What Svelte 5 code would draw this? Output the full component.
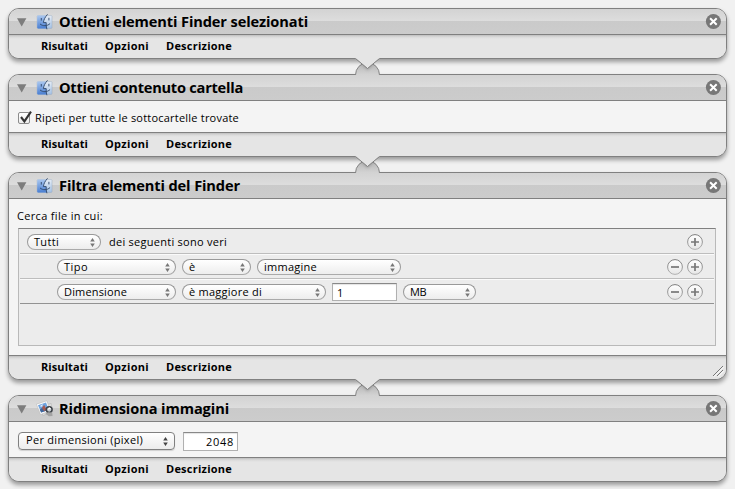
<script>
  const cards = [
    { title: 'Ottieni elementi Finder selezionati', width: 249, icon: 'finder', kind: 'none' },
    { title: 'Ottieni contenuto cartella', width: 184, icon: 'finder', kind: 'folder' },
    { title: 'Filtra elementi del Finder', width: 181, icon: 'finder', kind: 'filter' },
    { title: 'Ridimensiona immagini', width: 170, icon: 'photo', kind: 'resize' }
  ];

  const tabs = [
    { label: 'Risultati', width: 47 },
    { label: 'Opzioni', width: 44 },
    { label: 'Descrizione', width: 66 }
  ];

  // Spreads a label over the given width by adjusting its tracking.
  function fit(node, width) {
    const natural = node.getBoundingClientRect().width;
    node.style.letterSpacing = `${(width - natural) / node.textContent.length}px`;
  }
</script>

{#snippet label(text, width)}<span class="label" use:fit={width}>{text}</span>{/snippet}

{#snippet arrows()}
  <svg class="arrows" width="5" height="9" viewBox="0 0 5 9"><path d="M2.5 0 4.8 3.4H.2zM2.5 9 4.8 5.6H.2z" /></svg>
{/snippet}

{#snippet pill(text, textWidth, size)}
  <button class="pill {size}">{@render label(text, textWidth)}{@render arrows()}</button>
{/snippet}

{#snippet round(sign)}
  <button class="round" aria-label={sign}>
    <svg width="16" height="16" viewBox="0 0 16 16">
      <circle cx="8" cy="8" r="7.4" fill="url(#knob)" stroke="url(#rim)" />
      <path d={sign === 'plus' ? 'M4 8h8M8 4v8' : 'M4 8h8'} stroke="#777" stroke-width="1.7" />
    </svg>
  </button>
{/snippet}

<svg class="defs" width="0" height="0">
  <defs>
    <linearGradient id="knob" x2="0" y2="1"><stop stop-color="#fff" /><stop offset="1" stop-color="#e6e6e6" /></linearGradient>
    <linearGradient id="rim" x2="0" y2="1"><stop stop-color="#7c7c7c" /><stop offset="1" stop-color="#b2b2b2" /></linearGradient>
    <linearGradient id="hump" x2="0" y2="1"><stop stop-color="#b4b4b4" /><stop offset="1" stop-color="#d4d4d4" /></linearGradient>
    <linearGradient id="faceL" x2="0" y2="1"><stop stop-color="#a9c6ee" /><stop offset="1" stop-color="#4a7fd2" /></linearGradient>
    <linearGradient id="faceR" x2="0" y2="1"><stop stop-color="#e6edf6" /><stop offset="1" stop-color="#a5c2e5" /></linearGradient>
    <filter id="soft" x="-50%" y="-50%" width="200%" height="200%"><feGaussianBlur stdDeviation="1.6" /></filter>
  </defs>
</svg>

<main>
  {#each cards as card, i}
    <section class="card {card.kind}">
      <header>
        <svg class="disclosure" width="10" height="9" viewBox="0 0 10 9"><path d="M0 .3h9.4L4.7 8.6z" fill="#7d7d7d" /></svg>
        {#if card.icon === 'finder'}
          <svg class="icon" width="18" height="18" viewBox="0 0 18 18">
            <rect x="1.2" y="2.6" width="14.8" height="12.8" rx=".8" fill="url(#faceR)" stroke="#8b9fb9" stroke-width=".4" />
            <path d="M2 2.6h8.3C8.7 5 7.6 7.2 7.5 9.6h2.7c-.1 2 .1 3.8.7 5.8H2q-.8 0-.8-.8V3.4q0-.8.8-.8z" fill="url(#faceL)" />
            <path d="M11.3 1.6C9 4.2 7.7 6.8 7.4 9.6h2.8c-.2 2.3 0 4.2.6 6.3M4.3 11.2c2.6 2.2 6.8 2.1 9.5-.4M5.3 5.4v1.8M12.9 5.2v1.8" fill="none" stroke="#2f4668" stroke-width=".9" stroke-linecap="round" />
          </svg>
        {:else}
          <svg class="icon" width="18" height="18" viewBox="0 0 18 18">
            <path d="M4.8 6.4 15.2 3.4 16.6 11.6 6.8 15.6z" fill="#dedede" stroke="#aaa" stroke-width=".4" />
            <path d="M.4 4.2 10.8.8 14.4 10.6 4.6 14.6z" fill="#fafafa" stroke="#b5b5b5" stroke-width=".5" />
            <path d="M2 5.2 10 2.6 12.8 9.8 5.2 12.6z" fill="#6fa3de" />
            <path d="m3.8 9.8 2-1.9 3 .8 3-1.3 1 2.4-7.6 2.8z" fill="#41679b" />
            <path d="m3.6 6.2 2.6.6.6-2.8z" fill="#e5effb" />
            <path d="m6 7.6 2.2-2.6 2.2 4.6-2.3 1.7z" fill="#a95a50" />
            <circle cx="13.2" cy="9.6" r="2.9" fill="#c6ccd1" stroke="#3d4248" stroke-width="1.5" />
            <path d="m12.2 9.4 1.3-1.3.9 1.1" stroke="#fff" stroke-width="1.2" fill="none" />
            <path d="m9.3 13.4 3.6 2.8 3.6-.2-.3-3.4-4-.4z" fill="#a3a3a3" />
          </svg>
        {/if}
        <h2>{@render label(card.title, card.width)}</h2>
        <button class="close" aria-label="close">
          <svg width="16" height="16" viewBox="0 0 16 16"><circle cx="8.4" cy="7.5" r="7.5" fill="#777" /><path d="m5.1 4.2 6.6 6.6m0-6.6-6.6 6.6" stroke="#fff" stroke-width="2" /></svg>
        </button>
      </header>

      {#if card.kind === 'folder'}
        <div class="body">
          <span class="check"><svg width="16" height="16" viewBox="0 0 16 16"><path d="m4 7 3.4 4.4L14 1.6" fill="none" stroke="#333" stroke-width="2.1" /></svg></span>
          {@render label('Ripeti per tutte le sottocartelle trovate', 204)}
        </div>
      {:else if card.kind === 'filter'}
        <div class="body">
          <p>{@render label('Cerca file in cui:', 86)}</p>
          <div class="rules">
            <div class="rule first">
              {@render pill('Tutti', 25, 'w74')}
              <span class="after">{@render label('dei seguenti sono veri', 118)}</span>
              <span class="tools">{@render round('plus')}</span>
            </div>
            <div class="rule">
              {@render pill('Tipo', 24, 'w119')}
              {@render pill('è', 6, 'w69')}
              {@render pill('immagine', 53, 'w144')}
              <span class="tools">{@render round('minus')}{@render round('plus')}</span>
            </div>
            <div class="rule last">
              {@render pill('Dimensione', 63, 'w119')}
              {@render pill('è maggiore di', 73, 'w144')}
              <span class="field size">{@render label('1', 7)}</span>
              {@render pill('MB', 16, 'w73')}
              <span class="tools">{@render round('minus')}{@render round('plus')}</span>
            </div>
          </div>
        </div>
      {:else if card.kind === 'resize'}
        <div class="body">
          <button class="popup">{@render label('Per dimensioni (pixel)', 117)}{@render arrows()}</button>
          <span class="field pixels">{@render label('2048', 28)}</span>
        </div>
      {/if}

      <footer>
        {#each tabs as tab}
          {@render label(tab.label, tab.width)}
        {/each}
        {#if card.kind === 'filter'}
          <svg class="grip" width="12" height="12" viewBox="0 0 12 12"><path d="M1 11 11 1M5 11l6-6" stroke="#fff" transform="translate(.8 .8)" /><path d="M1 11 11 1M5 11l6-6" stroke="#777" /></svg>
        {/if}
      </footer>

      {#if i < cards.length - 1}
        <svg class="link" width="27" height="17" viewBox="0 0 27 17">
          <clipPath id="clip{i}"><path d="M1 17a12.5 13 0 0 1 25 0z" /></clipPath>
          <path d="M1.5 17a12 12.3 0 0 1 24 0" fill="url(#hump)" stroke="#858585" />
          <path d="M2 0 13.5 12 25 0z" fill="#777" opacity=".55" filter="url(#soft)" clip-path="url(#clip{i})" />
          <path d="M1 0h25L13.5 10.5z" fill="#e5e5e5" />
          <path d="M1.5.5 13.5 10.5 25.5.5" fill="none" stroke="#7f7f7f" />
        </svg>
      {/if}
    </section>
  {/each}
</main>

<style>
  :global(body) { margin: 0; background: #f1f1f1; }
  main {
    box-sizing: border-box; width: 735px; height: 489px; padding: 8px; overflow: hidden;
    display: flex; flex-direction: column; gap: 15px;
    background: #f1f1f1; color: #000; font: 11px/15px "Open Sans", "Noto Sans", sans-serif;
  }
  .defs { position: absolute; }
  svg { display: block; flex: none; }
  button { font: inherit; color: inherit; padding: 0; margin: 0; border: 0; background: none; text-align: left; }
  .label { display: inline-block; white-space: nowrap; }
  .card {
    position: relative; box-sizing: border-box; width: 719px; flex: none;
    display: flex; flex-direction: column;
    border: 1px solid #808080; border-radius: 11px; background: #f4f4f4;
    box-shadow: 0 3px 4px rgba(0, 0, 0, .36);
  }
  header {
    height: 25px; display: flex; align-items: center; padding: 0 5px 0 8px;
    border-bottom: 1px solid #808080; border-radius: 10px 10px 0 0;
    background: linear-gradient(#d3d3d3, #dddddd 12px, #cacaca 12px, #cccccc);
  }
  .icon { margin-left: 9px; }
  .disclosure { margin-top: 2px; }
  h2 { margin: 0 auto 0 5px; padding-bottom: 2px; font-size: 14.6px; line-height: 22px; font-weight: 700; }
  footer {
    box-sizing: content-box; height: 21px; display: flex; align-items: center; gap: 17px; padding: 0 0 2px 32px;
    border-radius: 0 0 10px 10px; font-weight: 700; line-height: 20px; position: relative;
    background: linear-gradient(#bfbfbf, #dadada 2px, #e5e5e5 4px);
  }
  .body + footer { border-top: 1px solid #808080; }
  .link { position: absolute; z-index: 1; left: 345px; bottom: -17px; }
  .grip { position: absolute; right: 2px; bottom: 2px; }

  .body { box-sizing: border-box; }
  .folder .body { height: 31px; display: flex; align-items: center; gap: 5px; padding: 1px 0 0 9px; }
  .check {
    box-sizing: border-box; width: 12px; height: 12px; border: 1px solid #8c8c8c; border-radius: 2px;
    background: linear-gradient(#fff, #eee); margin-top: 1px;
  }
  .check svg { margin: -3px 0 0 -2px; }

  .filter .body { height: 156px; padding: 9px 10px 9px 9px; display: flex; flex-direction: column; }
  .filter p { margin: 0 0 5px -1px; height: 15px; }
  .rules {
    flex: 1; padding: 0 1px; border: 1px solid #b9b9b9; border-top-color: #808080; background: #ececec;
  }
  .rule {
    box-sizing: border-box; height: 25px; display: flex; align-items: center; gap: 6px; padding: 2px 11px 0 37px;
    border-bottom: 1px solid #bdbdbd; box-shadow: 0 1px #fafafa;
  }
  .rule.first { padding-left: 7px; }
  .rule.last { border-bottom-color: #929292; box-shadow: none; }
  .after { margin-left: 2px; padding-bottom: 2px; }
  .tools { margin-left: auto; display: flex; gap: 4px; }
  .pill {
    box-sizing: border-box; height: 16px; display: flex; align-items: center; justify-content: space-between;
    border: 1px solid #999; border-bottom-color: #aaa; border-radius: 8px; padding: 0 5px 0 6px;
    background: linear-gradient(#fff, #f6f6f6 50%, #ededed); line-height: 14px;
  }
  .w69 { width: 69px; }
  .w73 { width: 73px; }
  .w74 { width: 74px; }
  .w119 { width: 119px; }
  .w144 { width: 144px; }
  .arrows path { fill: #777; }
  .field {
    box-sizing: border-box; border: 1px solid #b0b0b0; border-top-color: #888; background: #fff;
    box-shadow: inset 0 1px 1px #e4e4e4;
  }
  .size { width: 65px; height: 18px; padding: 1px 0 0 4px; }
  .pixels { width: 55px; height: 19px; padding: 1px 3px 0 0; text-align: right; }
  .resize .body { height: 35px; padding: 10px 0 0 9px; display: flex; align-items: flex-start; gap: 8px; }
  .popup {
    box-sizing: border-box; width: 157px; height: 18px; display: flex; align-items: center; justify-content: space-between;
    padding: 0 6px 0 7px; border: 1px solid #808080; border-radius: 4px; line-height: 14px;
    background: linear-gradient(#fff, #f5f5f5 50%, #ececec); box-shadow: 0 1px 1px rgba(0, 0, 0, .15);
  }
  .popup .label { padding-bottom: 2px; }
  .popup .arrows path { fill: #444; }
</style>
